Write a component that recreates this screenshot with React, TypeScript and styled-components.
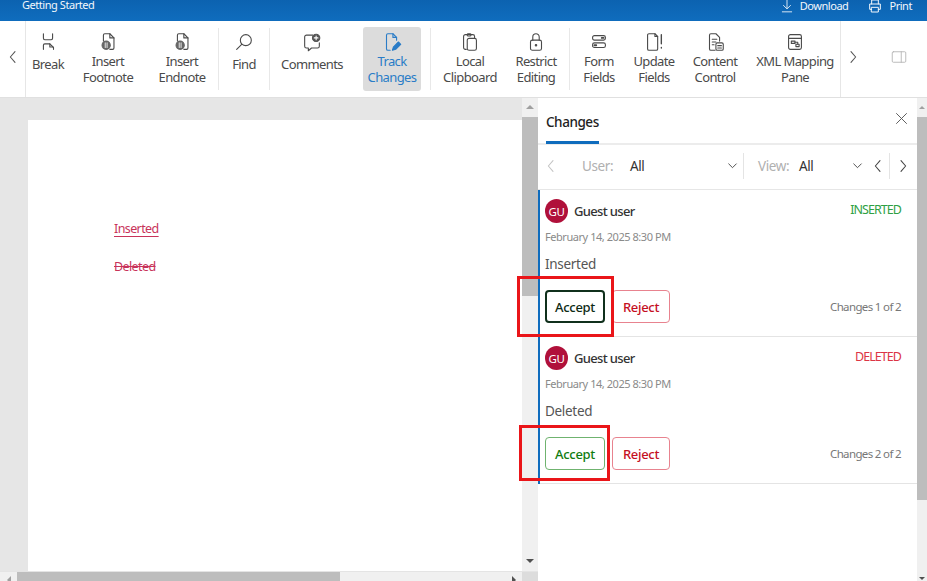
import React from 'react';
import styled, { createGlobalStyle } from 'styled-components';

const GlobalStyle = createGlobalStyle`
  html, body {
    margin: 0;
    padding: 0;
    background: #fff;
    font-family: "Noto Sans", "Open Sans", sans-serif;
    color: #333;
  }
  * { box-sizing: border-box; }
`;

const Screen = styled.div`
  position: relative;
  width: 927px;
  height: 581px;
  overflow: hidden;
  display: flex;
  flex-direction: column;
`;

const TitleBar = styled.div`
  height: 21px;
  flex: none;
  display: flex;
  align-items: flex-start;
  padding: 0 15px 0 22px;
  background: linear-gradient(#0c62b0, #0f6cbd);
  border-bottom: 1px solid #0f6cbd;
  color: #f2f7fc;
  font-size: 11px;
  line-height: 9px;
  letter-spacing: -0.45px;
  white-space: nowrap;
  overflow: hidden;
`;

const TitleAction = styled.div<{ $left?: number }>`
  height: 11px;
  display: flex;
  align-items: center;
  gap: 6px;
  margin-left: ${({ $left }) => ($left === undefined ? 'auto' : `${$left}px`)};
`;

const Toolbar = styled.div`
  height: 77px;
  flex: none;
  display: flex;
  background: #fff;
  border-bottom: 1px solid #e0e0e0;
`;

const NavCell = styled.div`
  width: 26px;
  flex: none;
  display: flex;
  align-items: center;
  justify-content: center;
  padding-bottom: 4px;
  border-right: 1px solid #e6e6e6;
  color: #555;
`;

const ToolItems = styled.div`
  width: 815px;
  flex: none;
  display: flex;
  align-items: flex-start;
  padding-top: 6px;
  border-right: 1px solid #e6e6e6;
`;

const ToolItem = styled.div<{ $w: number; $active?: boolean; $gap?: number }>`
  width: ${({ $w }) => $w}px;
  height: 64px;
  flex: none;
  margin-left: ${({ $gap }) => $gap || 0}px;
  display: flex;
  flex-direction: column;
  align-items: center;
  padding-top: 4px;
  border-radius: 3px;
  background: ${({ $active }) => ($active ? '#dcdcdc' : 'transparent')};
  color: ${({ $active }) => ($active ? '#2a7cc7' : '#4a4a4a')};
`;

const ToolLabel = styled.div<{ $single?: boolean }>`
  margin-top: ${({ $single }) => ($single ? '4px' : '1px')};
  font-size: 13px;
  line-height: 15.5px;
  text-align: center;
  letter-spacing: -0.6px;
  white-space: pre;
`;

const ToolSeparator = styled.div<{ $gap?: number }>`
  width: 1px;
  height: 62px;
  flex: none;
  margin: 1px 0 0 ${({ $gap }) => $gap || 0}px;
  background: #e8e8e8;
`;

const ToolbarEnd = styled.div`
  flex: 1;
  display: flex;
  align-items: center;
  padding: 0 19px 4px 4px;
  justify-content: space-between;
  color: #555;
`;

const Workspace = styled.div`
  flex: 1;
  min-height: 0;
  display: flex;
`;

const DocColumn = styled.div`
  width: 538px;
  flex: none;
  display: flex;
  flex-direction: column;
`;

const DocRow = styled.div`
  flex: 1;
  min-height: 0;
  display: flex;
`;

const DocCanvas = styled.div`
  width: 522px;
  flex: none;
  padding: 22px 0 0 28px;
  background: #e6e6e6;
`;

const Page = styled.div`
  height: 100%;
  padding: 100px 0 0 86px;
  background: #fff;
  font-size: 12.5px;
  line-height: 17px;
  color: #c8335a;
  letter-spacing: -0.6px;
`;

const Revision = styled.div<{ $kind: 'ins' | 'del' }>`
  margin-bottom: 21px;
  text-decoration: ${({ $kind }) => ($kind === 'ins' ? 'underline' : 'line-through')};
  text-underline-offset: 3px;
`;

const VScroll = styled.div<{ $w: number; $top: number }>`
  width: ${({ $w }) => $w}px;
  flex: none;
  display: flex;
  flex-direction: column;
  background: #f0f0f0;
  padding-top: ${({ $top }) => $top}px;
`;

const VThumb = styled.div<{ $h: number }>`
  height: ${({ $h }) => $h}px;
  flex: none;
  background: #bdbdbd;
`;

const ScrollArrow = styled.div<{ $size: number; $below?: number }>`
  width: 0;
  height: 0;
  align-self: center;
  border-left: ${({ $size }) => $size}px solid transparent;
  border-right: ${({ $size }) => $size}px solid transparent;
  ${({ $below, $size }) =>
    $below !== undefined
      ? `border-top: ${$size}px solid #505050; margin: auto 0 ${$below}px;`
      : `border-bottom: ${$size}px solid #a0a0a0; margin: 0 0 8px;`}
`;

const HScroll = styled.div`
  height: 10px;
  flex: none;
  display: flex;
  align-items: stretch;
  background: #f0f0f0;
  border-top: 1px solid #e4e4e4;
`;

const HArrowCell = styled.div<{ $w: number; $dir: 'left' | 'right' }>`
  width: ${({ $w }) => $w}px;
  flex: none;
  display: flex;
  justify-content: center;
  padding-top: 4px;
  margin-left: ${({ $dir }) => ($dir === 'right' ? 'auto' : '0')};
  &::before {
    content: '';
    width: 0;
    height: 0;
    border-top: 4px solid transparent;
    border-bottom: 4px solid transparent;
    ${({ $dir }) =>
      $dir === 'left' ? 'border-right: 4px solid #a0a0a0;' : 'border-left: 4px solid #505050;'}
  }
`;

const HThumb = styled.div`
  width: 323px;
  flex: none;
  background: #bdbdbd;
`;

const HCorner = styled.div`
  width: 16px;
  flex: none;
  background: #dcdcdc;
`;

const Panel = styled.div`
  width: 379px;
  flex: none;
  display: flex;
  flex-direction: column;
  background: #fff;
`;

const PanelHead = styled.div`
  height: 47px;
  flex: none;
  display: flex;
  justify-content: space-between;
  padding: 0 8px 0 8px;
  border-bottom: 2px solid #ececec;
  color: #555;
`;

const PanelTab = styled.div`
  height: 46px;
  padding-top: 15px;
  border-bottom: 3px solid #0f6cbd;
  font-size: 13.5px;
  line-height: 18px;
  font-weight: 500;
  letter-spacing: -0.45px;
  color: #222;
`;

const CloseGlyph = styled.div`
  padding-top: 13px;
`;

const FilterRow = styled.div`
  height: 45px;
  flex: none;
  display: flex;
  align-items: center;
  padding-bottom: 3px;
  border-bottom: 1px solid #e6e6e6;
  font-size: 13.5px;
  letter-spacing: -0.4px;
`;

const FilterCell = styled.div<{ $w: number; $pad?: number; $rule?: boolean }>`
  width: ${({ $w }) => $w}px;
  height: 26px;
  flex: none;
  display: flex;
  align-items: center;
  padding-left: ${({ $pad }) => $pad || 0}px;
  border-right: ${({ $rule }) => ($rule ? '1px solid #e4e4e4' : 'none')};
`;

const FilterName = styled.span<{ $w: number }>`
  width: ${({ $w }) => $w}px;
  color: #b0b0b0;
`;

const FilterValue = styled.span`
  flex: 1;
  color: #333;
`;

const FilterGap = styled.span<{ $w: number }>`
  width: ${({ $w }) => $w}px;
  flex: none;
`;

const CardList = styled.div`
  display: flex;
  flex-direction: column;
  border-left: 2px solid #0f6cbd;
`;

const Card = styled.div`
  height: 147px;
  padding: 9px 16px 0 5px;
  border-bottom: 1px solid #e4e4e4;
`;

const CardTop = styled.div`
  display: flex;
  align-items: flex-start;
`;

const Avatar = styled.div`
  width: 23px;
  height: 24px;
  flex: none;
  display: flex;
  align-items: center;
  justify-content: center;
  border-radius: 50%;
  background: #b0103a;
  color: #fff;
  font-size: 11.5px;
  letter-spacing: -0.3px;
`;

const UserName = styled.div`
  margin: 3px 0 0 6px;
  font-size: 13px;
  line-height: 18px;
  font-weight: 500;
  letter-spacing: -0.65px;
  color: #333;
`;

const StatusTag = styled.div<{ $color: string }>`
  margin: 2px 0 0 auto;
  font-size: 12.5px;
  line-height: 18px;
  letter-spacing: -0.95px;
  color: ${({ $color }) => $color};
`;

const DateLine = styled.div`
  margin-top: 6px;
  font-size: 11px;
  line-height: 16px;
  letter-spacing: -0.45px;
  color: #8a8a8a;
`;

const CardBody = styled.div`
  margin-top: 10px;
  font-size: 13.5px;
  line-height: 18px;
  letter-spacing: -0.3px;
  color: #555;
`;

const CardActions = styled.div`
  display: flex;
  align-items: center;
  gap: 7px;
  margin-top: 17px;
`;

const ActionButton = styled.div<{ $kind: 'accept' | 'focused' | 'reject' }>`
  height: 33px;
  width: ${({ $kind }) => ($kind === 'reject' ? '58px' : '60px')};
  display: flex;
  align-items: center;
  justify-content: center;
  border-radius: 4px;
  font-size: 13px;
  font-weight: 500;
  letter-spacing: -0.3px;
  ${({ $kind }) =>
    $kind === 'focused'
      ? 'border: 2px solid #10301c; color: #0d2a14;'
      : $kind === 'accept'
        ? 'border: 1px solid #6fb36f; color: #107c10;'
        : 'border: 1px solid #e8838f; color: #c50f1f;'}
`;

const ChangeCount = styled.div`
  margin-left: auto;
  font-size: 11.5px;
  letter-spacing: -0.65px;
  color: #777;
`;

const Callout = styled.div<{ $x: number; $y: number; $w: number; $h: number }>`
  position: absolute;
  left: ${({ $x }) => $x}px;
  top: ${({ $y }) => $y}px;
  width: ${({ $w }) => $w}px;
  height: ${({ $h }) => $h}px;
  border: 3px solid #ea1519;
  pointer-events: none;
`;

const Glyph = styled.svg.attrs({
  viewBox: '0 0 24 24',
  fill: 'none',
  stroke: 'currentColor',
  strokeWidth: 1.2,
  strokeLinecap: 'round',
  strokeLinejoin: 'round',
})<{ $size?: number; $tone?: string }>`
  width: ${({ $size }) => $size || 22}px;
  height: ${({ $size }) => $size || 22}px;
  flex: none;
  display: block;
  color: ${({ $tone }) => $tone || 'inherit'};
`;

const Chevron = ({ dir, size = 16, tone }: { dir: 'left' | 'right' | 'down'; size?: number; tone?: string }) => (
  <Glyph $size={size} $tone={tone}>
    {dir === 'left' && <path d="M15 4l-7 8 7 8" strokeWidth={1.6} />}
    {dir === 'right' && <path d="M9 4l7 8-7 8" strokeWidth={1.6} />}
    {dir === 'down' && <path d="M5 9l7 7 7-7" strokeWidth={1.7} />}
  </Glyph>
);

const NoteDoc = () => (
  <Glyph>
    <path d="M7 11V4.500A1.500 1.500 0 0 1 8.500 3H14l4.500 4.500v11a1.500 1.500 0 0 1-1.500 1.500h-3" />
    <path d="M14 3v4.500h4.500" />
    <circle cx="10" cy="15.500" r="4.500" fill="#666" stroke="#666" />
    <path d="M9 13v5M11 13v5" stroke="#ddd" />
  </Glyph>
);

const icons: Record<string, React.ReactNode> = {
  break: (
    <Glyph>
      <path d="M7 3v5a1.500 1.500 0 0 0 1.500 1.500h7A1.500 1.500 0 0 0 17 8V3" />
      <path d="M7 20v-4.500A1.500 1.500 0 0 1 8.500 14H14l4 4v2" />
      <path d="M14 14v3.500h3.500" />
    </Glyph>
  ),
  footnote: <NoteDoc />,
  endnote: <NoteDoc />,
  find: (
    <Glyph>
      <circle cx="14" cy="10" r="6" />
      <path d="M9.500 14.500L4 20" />
    </Glyph>
  ),
  comments: (
    <Glyph>
      <path d="M13 4.500H6A2 2 0 0 0 4 6.500v10a2 2 0 0 0 2 2h2v3l3.500-3H18a2 2 0 0 0 2-2V13" />
      <circle cx="16.500" cy="7.500" r="4" fill="#555" stroke="#555" />
      <path d="M16.500 5.500v4M14.500 7.500h4" stroke="#fff" />
    </Glyph>
  ),
  track: (
    <Glyph>
      <path d="M10 21H7.500A1.500 1.500 0 0 1 6 19.500v-15A1.500 1.500 0 0 1 7.500 3H13l4 4v3" />
      <path d="M13 3v4h4" />
      <path d="M12.500 21l1-3.500 5.500-5.500 2.500 2.500-5.500 5.500z" fill="currentColor" />
    </Glyph>
  ),
  clipboard: (
    <Glyph>
      <path d="M8 20H7a2 2 0 0 1-2-2V6a2 2 0 0 1 2-2h8a2 2 0 0 1 2 2v2" />
      <rect x="9" y="3" width="4" height="2.500" rx="1" />
      <rect x="9" y="8" width="10" height="13" rx="2" />
    </Glyph>
  ),
  restrict: (
    <Glyph>
      <rect x="6" y="10" width="12" height="11" rx="2" />
      <path d="M8.500 10V6.500a3.500 3.500 0 0 1 7 0V10" />
      <circle cx="12" cy="15.500" r="0.800" fill="currentColor" />
    </Glyph>
  ),
  form: (
    <Glyph>
      <rect x="5" y="5" width="14" height="5" rx="2" />
      <rect x="5" y="13" width="14" height="5" rx="2" />
      <path d="M15 7.500h2M7 15.500h2" strokeWidth={2} />
    </Glyph>
  ),
  update: (
    <Glyph>
      <path d="M13 3H6.500A1.500 1.500 0 0 0 5 4.500v15A1.500 1.500 0 0 0 6.500 21h8a1.500 1.500 0 0 0 1.500-1.500V6z" />
      <path d="M13 3v3h3" />
      <path d="M20 4v10M20 18v.5" strokeWidth={1.500} />
    </Glyph>
  ),
  content: (
    <Glyph>
      <path d="M12 21H7.500A1.500 1.500 0 0 1 6 19.500v-15A1.500 1.500 0 0 1 7.500 3H13l4 4v4" />
      <path d="M9 9h5M9 12h4M9 15h2" />
      <rect x="13" y="13" width="8" height="8" rx="1.500" />
      <path d="M15 16h4M15 18.500h4" />
    </Glyph>
  ),
  xml: (
    <Glyph>
      <rect x="5" y="4" width="14" height="16" rx="2" />
      <path d="M5 8h14" />
      <rect x="8" y="11" width="4" height="2.500" />
      <rect x="13" y="14.500" width="3.500" height="2.500" />
      <path d="M12 12.200h3v2.300" />
    </Glyph>
  ),
};

const tools = [
  { id: 'break', w: 44, label: 'Break', single: true },
  { id: 'footnote', w: 76, label: 'Insert\nFootnote' },
  { id: 'endnote', w: 72, label: 'Insert\nEndnote', rule: true },
  { id: 'find', w: 50, label: 'Find', single: true, rule: true },
  { id: 'comments', w: 84, label: 'Comments', single: true },
  { id: 'track', w: 58, gap: 9, active: true, label: 'Track\nChanges', ruleGap: 9, rule: true },
  { id: 'clipboard', w: 66, gap: 6, label: 'Local\nClipboard' },
  { id: 'restrict', w: 66, label: 'Restrict\nEditing', rule: true },
  { id: 'form', w: 56, gap: 1, label: 'Form\nFields' },
  { id: 'update', w: 54, label: 'Update\nFields' },
  { id: 'content', w: 68, label: 'Content\nControl' },
  { id: 'xml', w: 92, label: 'XML Mapping\nPane' },
];

const changes = [
  { tag: 'INSERTED', color: '#2ea043', body: 'Inserted', count: 'Changes 1 of 2', accept: 'focused' as const },
  { tag: 'DELETED', color: '#dc3545', body: 'Deleted', count: 'Changes 2 of 2', accept: 'accept' as const },
];

export default function App() {
  return (
    <Screen>
      <GlobalStyle />
      <TitleBar>
        <span>Getting Started</span>
        <TitleAction>
          <Glyph $size={14}>
            <path d="M12 2v14M6 11l6 6 6-6M4 22h16" strokeWidth={1.500} />
          </Glyph>
          <span>Download</span>
        </TitleAction>
        <TitleAction $left={19}>
          <Glyph $size={16}>
            <path d="M7 9V3h10v6M7 17H4V9h16v8h-3M7 14h10v7H7z" strokeWidth={1.500} />
          </Glyph>
          <span>Print</span>
        </TitleAction>
      </TitleBar>

      <Toolbar>
        <NavCell>
          <Chevron dir="left" />
        </NavCell>
        <ToolItems>
          {tools.map((t) => (
            <React.Fragment key={t.id}>
              <ToolItem $w={t.w} $gap={t.gap} $active={t.active}>
                {icons[t.id]}
                <ToolLabel $single={t.single}>{t.label}</ToolLabel>
              </ToolItem>
              {t.rule && <ToolSeparator $gap={t.ruleGap} />}
            </React.Fragment>
          ))}
        </ToolItems>
        <ToolbarEnd>
          <Chevron dir="right" />
          <Glyph $size={18} $tone="#b4b4b4">
            <rect x="3" y="5" width="18" height="14" rx="1.500" />
            <path d="M15 5v14" />
          </Glyph>
        </ToolbarEnd>
      </Toolbar>

      <Workspace>
        <DocColumn>
          <DocRow>
            <DocCanvas>
              <Page>
                <Revision $kind="ins">Inserted</Revision>
                <Revision $kind="del">Deleted</Revision>
              </Page>
            </DocCanvas>
            <VScroll $w={16} $top={7}>
              <ScrollArrow $size={4} />
              <VThumb $h={179} />
              <ScrollArrow $size={4} $below={8} />
            </VScroll>
          </DocRow>
          <HScroll>
            <HArrowCell $w={17} $dir="left" />
            <HThumb />
            <HArrowCell $w={17} $dir="right" />
            <HCorner />
          </HScroll>
        </DocColumn>

        <Panel>
          <PanelHead>
            <PanelTab>Changes</PanelTab>
            <CloseGlyph>
              <Glyph $size={15}>
                <path d="M4 4l16 16M20 4L4 20" strokeWidth={1.500} />
              </Glyph>
            </CloseGlyph>
          </PanelHead>
          <FilterRow>
            <FilterCell $w={44} $pad={5}>
              <Chevron dir="left" tone="#c4c4c4" />
            </FilterCell>
            <FilterCell $w={162} $rule>
              <FilterName $w={48}>User:</FilterName>
              <FilterValue>All</FilterValue>
              <Chevron dir="down" tone="#444" size={13} />
              <FilterGap $w={4} />
            </FilterCell>
            <FilterCell $w={122} $pad={14}>
              <FilterName $w={41}>View:</FilterName>
              <FilterValue>All</FilterValue>
              <Chevron dir="down" tone="#444" size={13} />
              <FilterGap $w={2} />
            </FilterCell>
            <FilterCell $w={24} $pad={4} $rule>
              <Chevron dir="left" tone="#444" />
            </FilterCell>
            <FilterCell $w={24} $pad={5}>
              <Chevron dir="right" tone="#444" />
            </FilterCell>
          </FilterRow>
          <CardList>
            {changes.map((c) => (
              <Card key={c.tag}>
                <CardTop>
                  <Avatar>GU</Avatar>
                  <UserName>Guest user</UserName>
                  <StatusTag $color={c.color}>{c.tag}</StatusTag>
                </CardTop>
                <DateLine>February 14, 2025 8:30 PM</DateLine>
                <CardBody>{c.body}</CardBody>
                <CardActions>
                  <ActionButton $kind={c.accept}>Accept</ActionButton>
                  <ActionButton $kind="reject">Reject</ActionButton>
                  <ChangeCount>{c.count}</ChangeCount>
                </CardActions>
              </Card>
            ))}
          </CardList>
        </Panel>

        <VScroll $w={10} $top={8}>
          <ScrollArrow $size={3} />
          <VThumb $h={383} />
          <ScrollArrow $size={3} $below={1} />
        </VScroll>
      </Workspace>

      <Callout $x={517} $y={276} $w={97} $h={61} />
      <Callout $x={519} $y={425} $w={91} $h={56} />
    </Screen>
  );
}
